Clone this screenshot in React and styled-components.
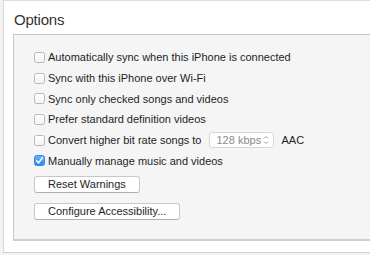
import React from "react";
import styled, { createGlobalStyle } from "styled-components";

const Global = createGlobalStyle`
  html, body { margin: 0; padding: 0; background: #f3f3f3; }
  body { font-family: "Liberation Sans", Arial, sans-serif; -webkit-font-smoothing: antialiased; }
`;

const Frame = styled.div`
  margin-left: 3px;
  width: 380px;
  height: 241px;
  background: #ffffff;
  border-top: 1px solid #dcdcdc;
  border-left: 1px solid #d6d6d6;
  border-bottom: 1px solid #d0d0d0;
  padding-top: 10px;
  box-sizing: content-box;
`;

const Title = styled.h2`
  margin: 0 0 6px 10px;
  font-size: 15px;
  line-height: 17px;
  font-weight: 400;
  color: #333333;
  letter-spacing: -0.2px;
`;

const Panel = styled.div`
  margin-left: 9px;
  height: 192px;
  background: #f5f5f5;
  border-top: 1px solid #c4c4c4;
  border-left: 1px solid #cacaca;
  border-bottom: 2px solid #cfcfcf;
  padding: 12px 0 0 20px;
  display: flex;
  flex-direction: column;
`;

const Row = styled.label`
  display: flex;
  align-items: center;
  height: 20.7px;
  font-size: 11px;
  color: #1e1e1e;
  white-space: nowrap;
`;

const Box = styled.span`
  width: 11px;
  height: 11px;
  box-sizing: border-box;
  border-radius: 2.5px;
  margin-right: 3px;
  display: inline-flex;
  align-items: center;
  justify-content: center;
  border: 1px solid ${(p) => (p.$checked ? "#2f86f2" : "#b8b8b8")};
  background: ${(p) =>
    p.$checked
      ? "linear-gradient(#6cb3fa, #2f86f2)"
      : "linear-gradient(#ffffff, #f4f4f4)"};
`;

const Select = styled.span`
  display: inline-flex;
  align-items: center;
  justify-content: space-between;
  box-sizing: border-box;
  width: 65px;
  height: 16px;
  margin: 0 7px 0 8px;
  padding: 0 4px 0 6px;
  background: #ffffff;
  border: 1px solid #d6d6d6;
  border-radius: 3px;
  color: #8a8a8a;
  font-size: 11px;
`;

const Buttons = styled.div`
  display: flex;
  flex-direction: column;
  align-items: flex-start;
  gap: 10px;
  margin-top: 5px;
`;

const Button = styled.button`
  height: 15px;
  box-sizing: content-box;
  padding: 0 13px;
  margin: 0;
  font-family: inherit;
  font-size: 11px;
  line-height: 13px;
  color: #1e1e1e;
  background: #ffffff;
  border: 1px solid #c8c8c8;
  border-bottom-color: #b0b0b0;
  border-radius: 3px;
`;

const Check = () => (
  <svg width="9" height="9" viewBox="0 0 9 9">
    <path d="M1.6 4.8 L3.6 6.9 L7.4 1.8" fill="none" stroke="#fff" strokeWidth="1.5" strokeLinecap="round" strokeLinejoin="round" />
  </svg>
);

const Chevrons = () => (
  <svg width="6" height="10" viewBox="0 0 6 10">
    <path d="M1 3.5 L3 1.5 L5 3.5 M1 6.5 L3 8.5 L5 6.5" fill="none" stroke="#9a9a9a" strokeWidth="0.9" />
  </svg>
);

const options = [
  { text: "Automatically sync when this iPhone is connected" },
  { text: "Sync with this iPhone over Wi-Fi" },
  { text: "Sync only checked songs and videos" },
  { text: "Prefer standard definition videos" },
  { text: "Convert higher bit rate songs to", select: true },
  { text: "Manually manage music and videos", checked: true },
];

export default function App() {
  return (
    <>
      <Global />
      <Frame>
        <Title>Options</Title>
        <Panel>
          {options.map((o) => (
            <Row key={o.text}>
              <Box $checked={o.checked}>{o.checked && <Check />}</Box>
              {o.text}
              {o.select && (
                <>
                  <Select>
                    128 kbps
                    <Chevrons />
                  </Select>
                  AAC
                </>
              )}
            </Row>
          ))}
          <Buttons>
            <Button>Reset Warnings</Button>
            <Button>Configure Accessibility...</Button>
          </Buttons>
        </Panel>
      </Frame>
    </>
  );
}
